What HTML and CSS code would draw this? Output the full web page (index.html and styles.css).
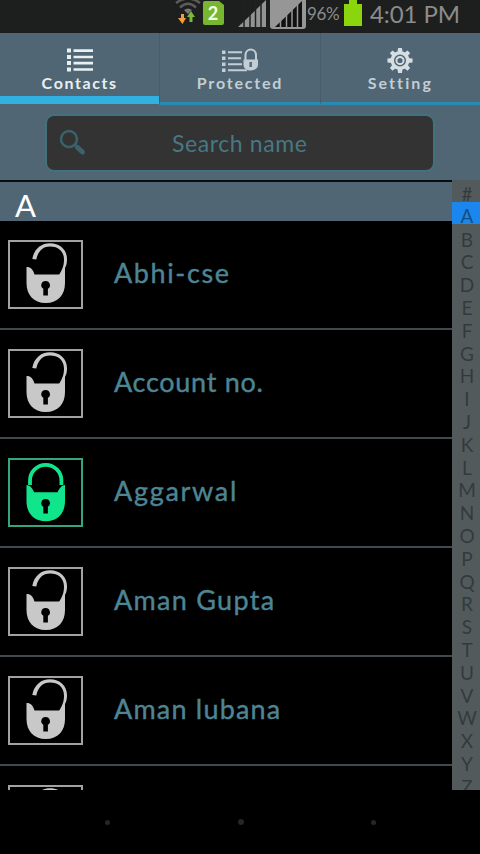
FILE: index.html
```html
<!DOCTYPE html>
<html lang="en">
<head>
<meta charset="utf-8">
<title>Contacts</title>
<link rel="stylesheet" href="styles.css">
</head>
<body>
<svg class="defs" width="0" height="0">
  <symbol id="open" viewBox="0 0 75 69">
    <path d="M18.500 27c4.500 0 6.500 2.500 8 7.500h30.500v8.500c0 12-7 20-19.200 20S18.500 55 18.500 43z"/>
    <path d="M24.300 19C26 9 33 3.200 42 3.200c10 0 17 6.500 17 15.800 0 5-1 7-2 9v8h-6.500c4-7 5.500-10 5.500-16.500C56 11 50 6.500 42 6.500c-7 0-12 4.500-13.700 13z"/>
    <path class="hole" d="M37.500 41a4.200 4.200 0 0 0-2.200 7.800V55.500h4.600V48.800a4.200 4.200 0 0 0-2.400-7.800z"/>
  </symbol>
  <symbol id="closed" viewBox="0 0 75 69">
    <path d="M22 27V22.500A15.700 15.700 0 0 1 53.400 22.500V27" class="shackle"/>
    <path class="gap" d="M18.500 27c3.500.3 6 3 7.500 7.300h23.500c2-4.300 4-7 7.500-7.300v16c0 12-7 20.200-19.200 20.200S18.500 55 18.500 43z"/>
    <path class="hole" d="M37.500 41a4.200 4.200 0 0 0-2.200 7.800V55.500h4.600V48.800a4.200 4.200 0 0 0-2.400-7.800z"/>
  </symbol>
</svg>
<div class="phone">
  <header class="status">
    <svg class="status-icons" width="145" height="33" viewBox="0 0 145 33">
      <g fill="none" stroke="#5c5c5c" stroke-width="2.500"><path d="M0 0Q13 9 26 0" visibility="hidden"/><path d="M1 3Q13-6 25 3M5 7.500Q13 0 21 7.500"/></g>
      <path d="M9 10q4-3 8 0l-4 4z" fill="#777"/>
      <path d="M6 14v4H3l4.500 6 3.500-6H9v-4z" fill="#f49b3c"/>
      <path d="M14.500 22v-5h-2.500l4-6 4 6h-2.500v5z" fill="#7cb83a"/>
      <path d="M30 1h14l5 4v18q0 2-2 2H30q-2 0-2-2V3q0-2 2-2z" fill="#78b630"/>
      <text x="38" y="20" class="sim">2</text>
      <path d="M63 27 91 0v27z" fill="#939393"/>
      <path d="M69 0v28M75 0v28M80.500 0v28M86 0v28" stroke="#202020" stroke-width="1.500"/>
      <path d="M96 0h35v26q0 3-3 3H98q-3 0-3-3V0z" fill="#969696"/>
      <path d="M100 27 127 1v26z" fill="#111"/>
      <path d="M105.500 19v9M111.500 13v15M117 8v20M122.500 3v25" stroke="#969696" stroke-width="1.500"/>
    </svg>
    <span class="percent">96%</span>
    <svg class="battery" width="18" height="33" viewBox="0 0 18 33"><path d="M5 0h8v4h5v22H0V4h5z" fill="#8bd50c"/></svg>
    <span class="clock">4:01 PM</span>
  </header>
  <nav class="tabs">
    <div class="tab active">
      <svg width="28" height="26" viewBox="0 0 28 26" fill="#e8f0f2"><path d="M1 1h4v4H1zM1 7.500h4v4H1zM1 13.500h4v4H1zM1 20h4v4H1zM7.500 1.800H27v2.600H7.500zM7.500 8.200H27v2.600H7.500zM7.500 14.300H27v2.600H7.500zM7.500 20.700H27v2.600H7.500z"/></svg>
      <span class="t1">Contacts</span>
    </div>
    <div class="tab">
      <svg width="38" height="26" viewBox="0 0 38 26" fill="#c2ced4"><path d="M1 3h3.500v3.500H1zM1 9h3.500v3.500H1zM1 15h3.500v3.500H1zM1 21h3.500v3.500H1zM7 3.700h14v2H7zM7 9.700h13v2H7zM7 15.700h14v2H7zM7 21.700h19v2H7z"/><path d="M24.500 13V8c0-8 10.500-8 10.500 0v5" fill="none" stroke="#c2ced4" stroke-width="2"/><path d="M22.500 12h14.500v5c0 8-14.500 8-14.500 0z"/><path d="M29.700 14.500v5" stroke="#566b79" stroke-width="2.500"/></svg>
      <span class="t2">Protected</span>
    </div>
    <div class="tab">
      <svg width="28" height="28" viewBox="-14 -14 28 28"><g fill="none" stroke="#d5dfe3"><circle r="8" stroke-width="3.500"/><circle r="3.700" stroke-width="2"/></g><path d="M-2-13h4l.7 5h-5.400zM-2 13h4l.7-5h-5.400zM-13-2v4l5 .7v-5.400zM13-2v4l-5 .7v-5.400zM-10.500-7.700l2.800-2.800L-4-7.500-7.500-4zM10.500-7.700l-2.800-2.800L4-7.500 7.500-4zM-10.500 7.700l2.800 2.800L-4 7.500-7.500 4zM10.500 7.700l-2.800 2.800L4 7.500 7.500 4z" fill="#d5dfe3"/></svg>
      <span class="t3">Setting</span>
    </div>
  </nav>
  <div class="searchbar">
    <div class="search">
      <svg width="28" height="28" viewBox="0 0 28 28" fill="none" stroke="#3a626b"><circle cx="10" cy="10" r="8" stroke-width="2.500"/><path d="m15.500 15.500 3 3" stroke-width="3"/><path d="m18.500 18.500 5 4.500" stroke-width="5" stroke-linecap="round"/></svg>
      <span>Search name</span>
    </div>
  </div>
  <main class="content">
    <div class="list">
      <h2>A</h2>
      <div class="row"><div class="lock"><svg width="75" height="69"><use href="#open"/></svg></div><span class="n1">Abhi-cse</span></div>
      <div class="row"><div class="lock"><svg width="75" height="69"><use href="#open"/></svg></div><span class="n2">Account no.</span></div>
      <div class="row"><div class="lock on"><svg width="75" height="69"><use href="#closed"/></svg></div><span class="n3">Aggarwal</span></div>
      <div class="row"><div class="lock"><svg width="75" height="69"><use href="#open"/></svg></div><span class="n4">Aman Gupta</span></div>
      <div class="row"><div class="lock"><svg width="75" height="69"><use href="#open"/></svg></div><span class="n5">Aman lubana</span></div>
      <div class="row"><div class="lock"><svg width="75" height="69"><use href="#open"/></svg></div></div>
    </div>
    <div class="index">
      <span>#</span><span class="cur">A</span><span>B</span><span>C</span><span>D</span><span>E</span><span>F</span><span>G</span><span>H</span><span>I</span><span>J</span><span>K</span><span>L</span><span>M</span><span>N</span><span>O</span><span>P</span><span>Q</span><span>R</span><span>S</span><span>T</span><span>U</span><span>V</span><span>W</span><span>X</span><span>Y</span><span>Z</span>
    </div>
  </main>
  <footer class="dots"><i></i><i class="mid"></i><i></i></footer>
</div>
</body>
</html>
```
FILE: styles.css
```css
* { box-sizing: border-box; }
body { margin: 0; background: #000; font-family: Lato, "Open Sans", sans-serif; }
.defs { display: block; }
.phone { width: 480px; height: 854px; display: flex; flex-direction: column; overflow: hidden; background: #000; }
.status { height: 33px; flex: none; background: #1d1f1f; display: flex; padding-left: 175px; color: #8c8c8c; white-space: nowrap; }
.status-icons { flex: none; margin-right: -13px; }
.sim { font: bold 18px Lato, sans-serif; fill: #f4ffe8; text-anchor: middle; }
.percent { width: 37px; font-size: 17px; line-height: 28px; letter-spacing: -0.3px; }
.battery { flex: none; margin-right: 8px; }
.clock { font-size: 24px; line-height: 28px; letter-spacing: -0.1px; }
.tabs { height: 72px; flex: none; background: #506675; display: flex; }
.tab { flex: 1; display: flex; flex-direction: column; align-items: center; border-bottom: 3px solid #278cb3; border-left: 1px solid #485d6b; padding-top: 14px; color: #c2ced4; font-weight: bold; font-size: 16px; line-height: 18px; letter-spacing: 1.4px; }
.tab svg { height: 27px; flex: none; }
.tab.active { border-bottom: 8px solid #31b1e0; border-left: 0; color: #e8f0f2; margin-bottom: 1px; }
.t1 { letter-spacing: 1.6px; }
.t2 { letter-spacing: 1.8px; }
.t3 { letter-spacing: 2.1px; }
.searchbar { height: 75px; flex: none; background: #506675; padding: 9px 45px 0; }
.search { height: 58px; width: 390px; border: 2px solid #42727e; border-radius: 9px; background: #333; display: flex; align-items: center; padding-left: 12px; color: #467983; font-size: 23px; }
.search span { margin-left: 85px; letter-spacing: 0.6px; }
.content { height: 610px; flex: none; display: flex; overflow: hidden; }
.list { width: 452px; flex: none; border-top: 2px solid #060c10; }
h2 { margin: 0; height: 39px; background: #506675; color: #fff; font-weight: 400; font-size: 31px; line-height: 39px; padding: 4px 0 0 15px; }
.row { height: 109px; border-bottom: 2px solid #3d4b4d; padding: 19px 0 0 8px; display: flex; color: #4d8595; font-size: 27px; -webkit-text-stroke: 0.4px #4d8595; }
.row > span { margin-left: 31px; line-height: 66px; }
.n1 { letter-spacing: 1.6px; }
.n2 { letter-spacing: 0.7px; }
.n3 { letter-spacing: 1.7px; }
.n4 { letter-spacing: 1.3px; }
.n5 { letter-spacing: 1.2px; }
.lock { width: 75px; height: 69px; border: 2px solid #a2a2a2; color: #c8c8c8; flex: none; -webkit-text-stroke: 0; }
.lock svg { display: block; margin: -2px; fill: currentColor; }
.lock.on { border-color: #36a57d; color: #10e58c; }
.hole { fill: #000; }
.gap { stroke: #000; stroke-width: 1px; paint-order: stroke; }
.shackle { fill: none; stroke: currentColor; stroke-width: 3.800px; }
.index { width: 28px; background: #525a5c; color: #333a3e; font-size: 19px; display: flex; flex-direction: column; }
.index span { height: 22.800px; line-height: 27px; flex: none; text-align: center; padding-left: 2px; }
.index .cur { background: #1b87ee; color: #164d82; height: 22px; margin-top: -0.800px; margin-bottom: 1.600px; }
.dots { flex: 1; display: flex; justify-content: space-between; align-items: center; padding: 0 104px 0 105px; }
.dots i { width: 5px; height: 5px; border-radius: 50%; background: #262626; }
.dots .mid { width: 6px; height: 6px; }
```
